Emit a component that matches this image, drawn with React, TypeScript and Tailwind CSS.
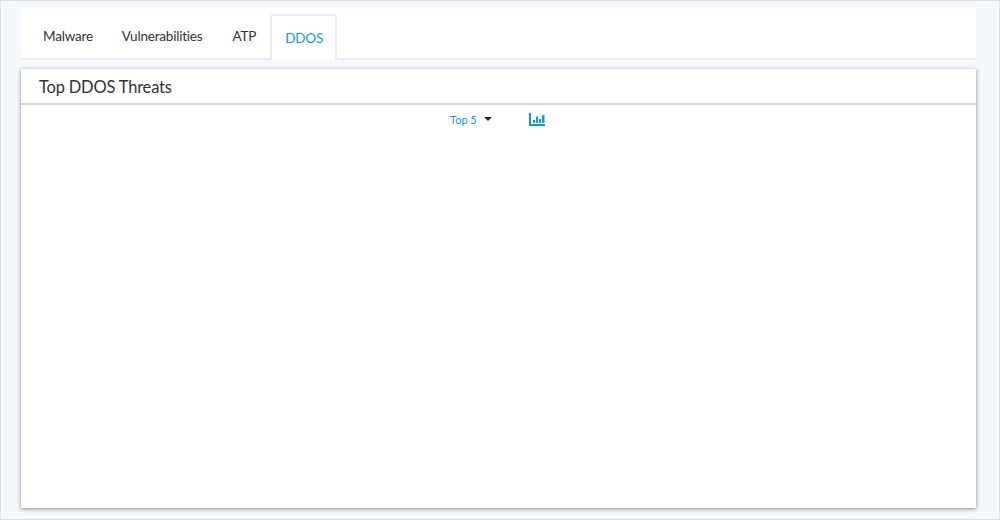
export default function App() {
  return (
    <div className="h-[520px] w-[1000px] overflow-hidden border border-[#dde1e4] bg-[#f5f9fd] pl-5 pr-[23px] pt-[6px] font-['Lato','Open_Sans',sans-serif]">
      <div className="flex h-[53px] items-end border-b-2 border-[#ececec] bg-white pl-[7px]">
        <div className="-mb-[2px] flex h-[46px] items-stretch text-[13.5px] tracking-[-0.2px] text-[#333]">
          <div className="flex items-center pb-px pl-[15px] pr-[14px]">Malware</div>
          <div className="flex items-center pb-px pl-[15px] pr-[15px]">Vulnerabilities</div>
          <div className="flex items-center pb-px pl-[15px] pr-[14px]">ATP</div>
          <div className="flex w-[67px] items-center justify-center rounded-t-[3px] border-x-2 border-t-2 border-[#ececec] bg-white pl-px text-[#0f9ad7]">DDOS</div>
        </div>
      </div>
      <div className="mt-[9px] h-[439px] bg-white shadow-[0_1px_4px_rgba(0,0,0,0.45)]">
        <div className="flex h-[36px] items-center border-b-2 border-[#d4d4d4] pl-[18px] pt-[2px] text-[16.5px] tracking-[-0.2px] text-[#333]">Top DDOS Threats</div>
        <div className="flex h-[30px] items-center pl-[429px]">
          <span className="text-[11px] text-[#0f9ad7]">Top 5</span>
          <span className="mb-[3px] ml-[7px] h-0 w-0 border-x-[4px] border-t-[4px] border-x-transparent border-t-[#222]"></span>
          <svg className="mb-[1px] ml-[37px]" width="16" height="13" viewBox="0 0 16 13" fill="#0f9ad7">
            <rect x="0" y="0" width="2" height="13" />
            <rect x="0" y="11" width="16" height="2" />
            <rect x="4" y="7" width="2" height="3" />
            <rect x="7" y="3.5" width="2" height="6.5" />
            <rect x="10" y="6" width="2" height="4" />
            <rect x="13" y="2" width="2.5" height="8" />
          </svg>
        </div>
      </div>
    </div>
  );
}
